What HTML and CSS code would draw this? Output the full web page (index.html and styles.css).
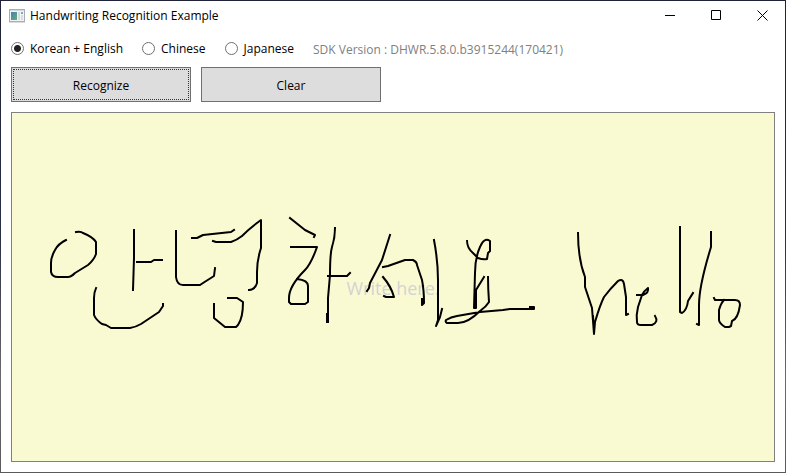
FILE: index.html
```html
<!DOCTYPE html>
<html lang="en">
<head>
<meta charset="utf-8">
<title>Handwriting Recognition Example</title>
<link rel="stylesheet" href="styles.css">
</head>
<body>
<div class="window">
  <header class="titlebar">
    <svg class="app-icon" width="16" height="14" viewBox="0 0 16 14" aria-hidden="true">
      <defs>
        <linearGradient id="pane" x1="0" y1="0" x2="1" y2="1">
          <stop offset="0" stop-color="#4a7fb0"/>
          <stop offset="1" stop-color="#5fae80"/>
        </linearGradient>
      </defs>
      <rect x="0.5" y="0.5" width="15" height="12" fill="#f1f3f4" stroke="#a9adb1"/>
      <path d="M1 1.5H15" stroke="#d5d9dc"/>
      <rect x="2" y="3" width="6" height="8" fill="url(#pane)"/>
      <rect x="9" y="3" width="2" height="8" fill="#d9dde0"/>
      <rect x="12" y="3" width="2" height="2" fill="#7fa6cc"/>
      <rect x="12" y="6" width="2" height="5" fill="#d9dde0"/>
      <path d="M0 13.5H16" stroke="#dcdcdc"/>
    </svg>
    <h1 class="title">Handwriting Recognition Example</h1>
    <div class="caption-buttons">
      <button class="caption" type="button" aria-label="Minimize"><svg width="11" height="11" viewBox="0 0 11 11"><path d="M0 5.5H10"/></svg></button>
      <button class="caption" type="button" aria-label="Maximize"><svg width="11" height="11" viewBox="0 0 11 11"><path d="M0.5 0.5H9.5V9.5H0.5Z"/></svg></button>
      <button class="caption" type="button" aria-label="Close"><svg width="11" height="11" viewBox="0 0 11 11"><path d="M0.5 0.5L10.5 10.5M10.5 0.5L0.5 10.5"/></svg></button>
    </div>
  </header>
  <main class="content">
    <div class="options">
      <label class="option"><input type="radio" name="language" checked>Korean + English</label>
      <label class="option"><input type="radio" name="language">Chinese</label>
      <label class="option"><input type="radio" name="language">Japanese</label>
      <span class="version">SDK Version : DHWR.5.8.0.b3915244(170421)</span>
    </div>
    <div class="actions">
      <button class="action action-focused" type="button">Recognize</button>
      <button class="action" type="button">Clear</button>
    </div>
    <div class="pad">
      <span class="hint">Write here.</span>
      <svg class="ink" viewBox="12 113 762 348" role="img" aria-label="Handwritten text">
        <path d="M66 240Q58 244 55 250Q51 257 51 263V272Q52 277 58 277H68Q71 277 75 273L88 265Q94 260 96 254V242Q93 237 83 233Q81 231 76 232"/>
        <path d="M134 230V258L133 290M137 262H151L154 260H162"/>
        <path d="M96 288Q94 292 94 298V315Q96 320 102 324L106 325L111 328H130Q136 327 141 324L159 312L163 306V304"/>
        <path d="M176 231V277Q177 285 183 285H200L203 283L214 276L215 268"/>
        <path d="M192 238H197L203 235L231 232L234 230"/>
        <path d="M213 241L216 242H231Q237 240 242 236Q250 228 261 220V248Q257 260 257 272V283Q255 290 249 290"/>
        <path d="M228 298H237L243 302Q243 318 238 325L236 327H225L214 318V304"/>
        <path d="M290 218L305 230L315 235L314 237"/>
        <path d="M291 247H317Q311 264 305 270Q289 286 289 298V302L291 304H305L308 302V286Q308 280 297 279"/>
        <path d="M335 228Q335 238 332 247Q330 254 330 275L328 298V322M327 314V322M328 276H347L350 273"/>
        <path d="M390 235L382 260L370 283L369 288L367 291"/>
        <path d="M383 267L388 266L405 260H413Q417 262 417 265L422 280Q424 290 424 303L422 305V299"/>
        <path d="M383 277Q391 286 394 297H386L384 296"/>
        <path d="M434 240Q438 261 438 280V320L436 326L440 317L442 309"/>
        <path d="M467 241Q467 248 473 253L478 258Q483 260 487 259L488 253L490 251V241Q484 237 480 247Q475 258 475 273L474 308H476V290L484 277M475 290V308M488 277Q488 288 489 302Q486 307 480 311Q468 323 458 323H447Q445 322 446 320Q451 317 457 316L480 312L503 310L510 309H534V307H530"/>
        <path d="M578 233Q578 259 585 277V287L592 308L594 334L595 322Q600 305 604 297Q610 289 618 281Q623 278 624 284L626 297V315L628 314M593 316L594 330"/>
        <path d="M637 295H643Q649 293 648 288Q644 291 642 295L638 307Q636 315 637 322Q637 325 641 325H652Q659 322 655 316"/>
        <path d="M680 227V312L682 313Q687 310 688 301L693 293"/>
        <path d="M711 232V247Q699 286 699 305V325L697 324"/>
        <path d="M714 298L715 300H735Q740 300 740 305Q738 319 732 321L731 326L729 327H725Q719 323 719 320V310Q721 303 724 300"/>
      </svg>
    </div>
  </main>
</div>
</body>
</html>
```
FILE: styles.css
```css
* {
  box-sizing: border-box;
}

body {
  margin: 0;
  padding: 1px;
  min-height: 100vh;
  display: flex;
  background: linear-gradient(#1f2238, #2b2f42 50%, #6a6a6c 80%, #5a5a5c);
  color: #000;
  font-family: "Open Sans", "Noto Sans CJK KR", sans-serif;
  font-size: 12px;
  line-height: 16px;
}

.window {
  flex: 1;
  display: flex;
  flex-direction: column;
  background: #fff;
}

.titlebar {
  display: flex;
  align-items: center;
  height: 29px;
  padding-left: 8px;
}

.app-icon {
  margin-right: 5px;
}

.title {
  flex: 1;
  margin: 0;
  font-size: 12px;
  font-weight: 400;
}

.caption-buttons {
  display: flex;
}

.caption {
  display: flex;
  align-items: center;
  justify-content: center;
  width: 46px;
  height: 28px;
  padding: 0;
  border: 0;
  background: none;
}

.caption path {
  fill: none;
  stroke: #000;
}

.content {
  flex: 1;
  display: flex;
  flex-direction: column;
  gap: 10px;
  padding: 10px;
}

.options {
  display: flex;
  align-items: center;
  gap: 19px;
  height: 17px;
}

.option {
  display: flex;
  align-items: center;
  gap: 6px;
}

.option input {
  appearance: none;
  width: 13px;
  height: 13px;
  margin: 0;
  border: 1px solid #707070;
  border-radius: 50%;
  background: #fff;
}

.option input:checked {
  background: radial-gradient(circle, #212121 3px, #fff 4px);
}

.version {
  padding-top: 2px;
  color: #808080;
}

.actions {
  display: flex;
  gap: 10px;
}

.action {
  width: 180px;
  height: 35px;
  padding: 3px 1px 1px;
  border: 1px solid #707070;
  background: #ddd;
  color: #000;
  font: inherit;
}

.action-focused {
  outline: 1px dotted #333;
  outline-offset: -3px;
}

.pad {
  flex: 1;
  display: grid;
  place-items: center;
  border: 1px solid #808080;
  background: #fafad2;
}

.hint,
.ink {
  grid-area: 1 / 1;
}

.hint {
  padding-top: 2px;
  color: #d3d3d3;
  font-size: 18px;
  line-height: 24px;
}

.ink {
  width: 100%;
  fill: none;
  stroke: #000;
  stroke-width: 2;
  stroke-linecap: square;
  stroke-linejoin: round;
}
```
